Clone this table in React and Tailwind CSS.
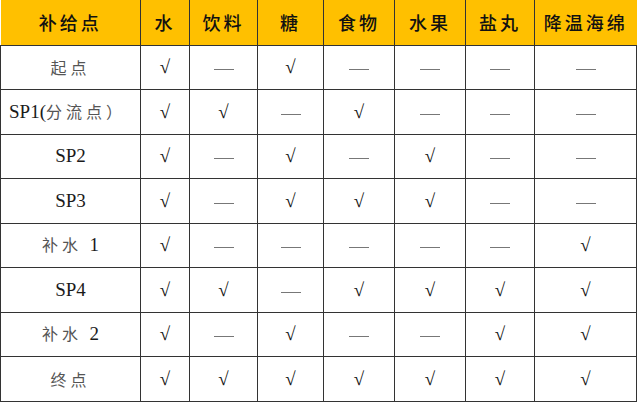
import React from "react";

const cols = ["水", "饮料", "糖", "食物", "水果", "盐丸", "降温海绵"];
const widths = ["w-[140px]", "w-[49px]", "w-[68px]", "w-[66px]", "w-[71px]", "w-[71px]", "w-[69px]", "w-[102px]"];

// 1 = √, 0 = —
const rows = [
  { name: "起点", v: [1, 0, 1, 0, 0, 0, 0] },
  { name: "SP1(分流点）", v: [1, 1, 0, 1, 0, 0, 0], left: true },
  { name: "SP2", v: [1, 0, 1, 0, 1, 0, 0] },
  { name: "SP3", v: [1, 0, 1, 1, 1, 0, 0] },
  { name: "补水 1", v: [1, 0, 0, 0, 0, 0, 1] },
  { name: "SP4", v: [1, 1, 0, 1, 1, 1, 1] },
  { name: "补水 2", v: [1, 0, 1, 0, 0, 1, 1] },
  { name: "终点", v: [1, 1, 1, 1, 1, 1, 1] },
];

const Name = ({ text }) => {
  // latin bits in serif, hanzi in a lighter grey
  const parts = text.split(/([A-Za-z0-9()]+)/).filter(Boolean);
  return (
    <>
      {parts.map((p, i) =>
        /[A-Za-z0-9()]/.test(p) ? (
          <span key={i} className="text-[#1a1a1a] font-[Liberation_Serif] text-[19px]">{p}</span>
        ) : (
          <span key={i} className="text-[#555] tracking-[4px] text-[16px]">{p}</span>
        )
      )}
    </>
  );
};

const Mark = ({ on }) =>
  on ? (
    <span className="text-[#111] text-[19px] font-[Liberation_Serif]">√</span>
  ) : (
    <span className="inline-block w-[20px] h-px bg-[#777] align-middle" />
  );

export default function App() {
  return (
    <div className="w-[640px] h-[407px] bg-white font-[Noto_Sans_CJK_SC]">
      <table className="table-fixed border-collapse w-[637px]">
        <thead>
          <tr className="h-[45px] bg-[#ffc000]">
            <th className={`${widths[0]} border-r border-b border-[#333] text-[18px] font-medium text-[#111] tracking-[3px]`}>补给点</th>
            {cols.map((c, i) => (
              <th
                key={c}
                className={`${widths[i + 1]} border-r border-b border-[#333] text-[18px] font-medium text-[#111] tracking-[3px] last:border-r-0`}
              >
                {c}
              </th>
            ))}
          </tr>
        </thead>
        <tbody>
          {rows.map((r) => (
            <tr key={r.name} className="h-[44.5px]">
              <td className={`border border-[#333] ${r.left ? "text-left pl-2" : "text-center"} whitespace-nowrap`}>
                <Name text={r.name} />
              </td>
              {r.v.map((on, i) => (
                <td key={i} className="border border-[#333] text-center">
                  <Mark on={on} />
                </td>
              ))}
            </tr>
          ))}
        </tbody>
      </table>
    </div>
  );
}
